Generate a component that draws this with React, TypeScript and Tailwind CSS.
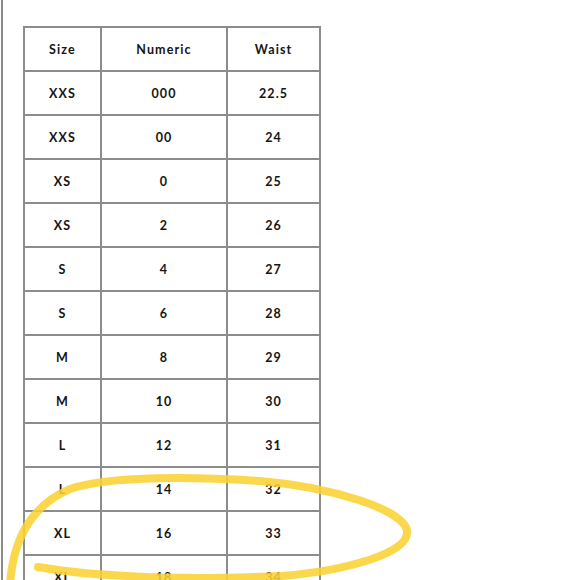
import React from "react";

const rows: [string, string, string][] = [
  ["XXS", "000", "22.5"],
  ["XXS", "00", "24"],
  ["XS", "0", "25"],
  ["XS", "2", "26"],
  ["S", "4", "27"],
  ["S", "6", "28"],
  ["M", "8", "29"],
  ["M", "10", "30"],
  ["L", "12", "31"],
  ["L", "14", "32"],
  ["XL", "16", "33"],
  ["XL", "18", "34"],
];

function Cell({ children }: { children: React.ReactNode }) {
  return (
    <div className="h-[44px] pt-[3px] flex items-center justify-center border-r-2 border-b-2 border-[#8c8c8c] text-[12.5px] font-bold tracking-[0.09em] text-[#151515]">
      {children}
    </div>
  );
}

export default function App() {
  return (
    <div
      className="w-[580px] h-[580px] bg-white relative overflow-hidden flex"
      style={{ fontFamily: "Lato, 'Noto Sans', sans-serif" }}
    >
      <div className="ml-[1px] w-[2px] h-full bg-[#8a8a8a]" />
      <div className="ml-[20px] mt-[26px]">
        <div className="grid grid-cols-[77px_126px_93px] border-l-2 border-t-2 border-[#8c8c8c]">
          <Cell>Size</Cell>
          <Cell>Numeric</Cell>
          <Cell>Waist</Cell>
          {rows.map((r, i) => (
            <React.Fragment key={i}>
              <Cell>{r[0]}</Cell>
              <Cell>{r[1]}</Cell>
              <Cell>{r[2]}</Cell>
            </React.Fragment>
          ))}
        </div>
      </div>
      <svg
        className="absolute inset-0 pointer-events-none"
        width="580"
        height="580"
        viewBox="0 0 580 580"
      >
        <path
          d="M 10 584 C 13 542, 30 506, 70 489 C 110 475, 200 477, 260 481 C 330 487, 404 509, 407 531 C 410 554, 342 571, 282 576 C 200 580, 100 578, 38 567"
          fill="none"
          stroke="#fbd232"
          strokeOpacity="0.88"
          strokeWidth="8"
          strokeLinecap="round"
        />
      </svg>
    </div>
  );
}
